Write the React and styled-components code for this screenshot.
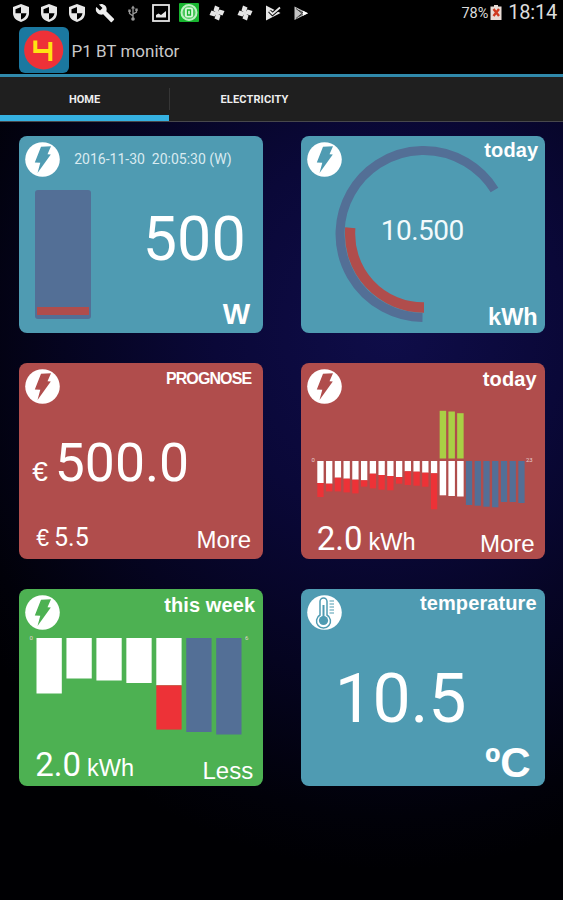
import React from 'react'
import styled, { createGlobalStyle, css } from 'styled-components'

const GlobalStyle = createGlobalStyle`
  * {
    box-sizing: border-box;
  }
  body {
    margin: 0;
    background: #000;
    font-family: Roboto, sans-serif;
  }
`

const teal = '#4f9bb2'
const red = '#b04d4c'
const green = '#4db152'
const slate = '#536f96'
const alert = '#ed3237'

const Screen = styled.main`
  display: flex;
  flex-direction: column;
  width: 563px;
  height: 900px;
  overflow: hidden;
  color: #fff;
  background: radial-gradient(ellipse 500px 540px at 390px 330px, #0f0d49 0%, #0a0838 35%, #050420 65%, #010109 90%, #000003 100%);
`

/* status bar */

const StatusBar = styled.header`
  display: flex;
  align-items: center;
  height: 25px;
  padding: 0 6px 0 10.5px;
  background: #000;
`

const StatusIcon = styled.svg`
  flex: none;
  width: 20px;
  height: 20px;
  margin-right: 8.1px;
`

const StatusInfo = styled.div`
  display: flex;
  align-items: center;
  margin-left: auto;
  color: #dcdcdc;
  white-space: nowrap;
`

const Percent = styled.span`
  font-size: 14.5px;
  letter-spacing: -0.1px;
  padding-top: 1px;
`

const Battery = styled.svg`
  width: 12px;
  height: 15px;
  margin: 0 6px 0 2px;
`

const Clock = styled.span`
  font-size: 20px;
  line-height: 25px;
  letter-spacing: -0.2px;
`

/* app bar and tabs */

const AppBar = styled.div`
  display: flex;
  align-items: center;
  height: 49px;
  padding: 1px 0 0 19px;
  background: #000;
`

const Logo = styled.svg`
  width: 50px;
  height: 46px;
`

const AppTitle = styled.h1`
  margin: 1px 0 0 2.5px;
  font-size: 17px;
  font-weight: 400;
  color: #c9c9c9;
`

const Tabs = styled.nav`
  display: flex;
  height: 48px;
  border-top: 3px solid #3089ab;
  border-bottom: 1px solid #48484c;
  background: #1f1f1f;
`

const Tab = styled.div`
  display: flex;
  align-items: center;
  justify-content: center;
  width: 169px;
  padding-top: 6px;
  font-size: 11px;
  font-weight: 700;
  letter-spacing: ${({ $spacing }) => $spacing ?? 0}px;
  color: #eee;
  border-bottom: 6px solid ${({ $active }) => ($active ? '#35b1e1' : 'transparent')};
`

const TabDivider = styled.div`
  width: 1px;
  height: 22px;
  margin-top: 11px;
  background: #363636;
`

/* cards */

const Grid = styled.section`
  display: grid;
  grid-template-columns: 244px 244px;
  grid-auto-rows: 196.5px;
  column-gap: 37.5px;
  row-gap: 30px;
  padding: 14px 0 0 19.2px;
`

const Card = styled.article`
  display: flex;
  flex-direction: column;
  border-radius: 8px;
  overflow: hidden;
  background: ${({ $color }) => $color};
`

const CardHeader = styled.div`
  display: flex;
  justify-content: space-between;
  height: 41px;
  padding: 6px 0 0 6px;
`

const Badge = styled.svg`
  flex: none;
  width: 35px;
  height: 35px;
`

const arial = css`
  font-family: 'Liberation Sans', Arial, sans-serif;
`

const Title = styled.h2`
  ${arial}
  margin: ${({ $top }) => $top ?? 0}px ${({ $right }) => $right ?? 8}px 0 0;
  font-size: 20px;
  line-height: 20px;
  font-weight: 700;
  letter-spacing: 0.1px;
`

const SmallTitle = styled(Title)`
  font-size: 16px;
  line-height: 16px;
  letter-spacing: -0.9px;
`

const Timestamp = styled.time`
  margin: 10px auto 0 14px;
  font-size: 14px;
  line-height: 14px;
  color: #d9eaf0;
  white-space: pre;
`

const PowerBody = styled.div`
  display: flex;
  justify-content: space-between;
  padding: 13px 13px 0 15.5px;
`

const Tank = styled.div`
  display: flex;
  align-items: flex-end;
  width: 56px;
  height: 129px;
  padding: 0 2px 4px;
  border-radius: 3px;
  background: ${slate};
`

const TankLevel = styled.div`
  width: 100%;
  height: 8px;
  background: ${red};
`

const PowerReadout = styled.div`
  display: flex;
  flex-direction: column;
  align-items: flex-end;
`

const PowerValue = styled.div`
  margin: 18.5px 4.5px 0 0;
  font-size: 61px;
  line-height: 61px;
`

const Unit = styled.div`
  ${arial}
  font-size: ${({ $size }) => $size}px;
  line-height: 1;
  font-weight: 700;
`

const PowerUnit = styled(Unit)`
  margin-top: 30px;
`

const GaugeCard = styled(Card)`
  display: grid;

  > * {
    grid-area: 1 / 1;
  }
`

const GaugeDial = styled.svg`
  width: 244px;
  height: 196.5px;
`

const GaugeValue = styled.div`
  align-self: center;
  margin: -7px 0 0 80px;
  font-size: 28px;
  line-height: 28px;
  letter-spacing: -0.5px;
  color: #f2fafc;
`

const GaugeUnit = styled(Unit)`
  align-self: end;
  justify-self: end;
  margin: 0 7px 3.5px 0;
`

const CostBody = styled.div`
  display: flex;
  align-items: baseline;
  height: 106px;
  padding: 32px 0 0 13px;
`

const Currency = styled.span`
  ${arial}
  font-size: ${({ $size }) => $size}px;
  line-height: 1;
  margin-right: ${({ $gap }) => $gap}px;
`

const CostValue = styled.span`
  font-size: 53.5px;
  line-height: 1;
`

const CardFooter = styled.div`
  display: flex;
  align-items: baseline;
  margin-top: auto;
  height: ${({ $height }) => $height ?? 38.5}px;
  padding: 0 ${({ $right }) => $right ?? 10}px 0 ${({ $left }) => $left ?? 16}px;
`

const Total = styled.span`
  font-size: ${({ $size }) => $size ?? 33}px;
  line-height: 36px;
`

const TotalUnit = styled.span`
  ${arial}
  margin-left: 6px;
  font-size: 23.5px;
  line-height: 1;
`

const Toggle = styled.span`
  ${arial}
  margin-left: auto;
  padding-top: ${({ $drop }) => $drop ?? 0}px;
  align-self: flex-start;
  font-size: 24px;
  line-height: 24px;
`

const Chart = styled.svg`
  width: 244px;
  height: 114px;
`

const AxisLabel = styled.text`
  font-size: 6px;
  fill: #e6cfcf;
`

const TemperatureValue = styled.div`
  margin: 34.5px 0 0 34px;
  font-size: 68px;
  line-height: 68px;
  letter-spacing: -0.3px;
`

const TemperatureUnit = styled(Unit)`
  margin: auto 14px 0 auto;
  padding-bottom: 2px;
`

const Shield = () => (
  <StatusIcon viewBox="0 0 20 20">
    <path d="M10 1 18 4V10c0 4.500-3 7.500-8 9-5-1.500-8-4.500-8-9V4Z" fill="#e8e8e8" />
    <path d="M10 4v6.200h5.500c-.3 2.900-2.500 5-5.500 6.300v-6.300H4.500V6.200Z" fill="#000" />
  </StatusIcon>
)

const Wrench = () => (
  <StatusIcon viewBox="0 0 24 24">
    <path
      d="M22.700 19l-9.100-9.100c.9-2.300.4-5-1.500-6.900-2-2-5-2.400-7.400-1.300L9 6 6 9 1.600 4.700C.4 7.100.9 10.100 2.900 12.100c1.900 1.900 4.600 2.400 6.900 1.500l9.100 9.100c.4.400 1 .4 1.400 0l2.300-2.300c.5-.4.5-1.100.1-1.400z"
      fill="#eee"
    />
  </StatusIcon>
)

const Usb = () => (
  <StatusIcon viewBox="0 0 20 20" fill="none" stroke="#999" strokeWidth="1.300">
    <path d="M10 4v11M10 13 6.500 10.500V8M10 11l3.500-2V7" />
    <path d="M10 2.500 12 5.500H8Z" fill="#999" stroke="none" />
    <circle cx="10" cy="16" r="1.800" fill="#999" stroke="none" />
    <path d="M5.300 6.500h2.400v2.400H5.300zM12.300 5.500h2.400v2.400h-2.400z" fill="#999" stroke="none" />
  </StatusIcon>
)

const Picture = () => (
  <StatusIcon viewBox="0 0 20 20">
    <rect x="2" y="2" width="16" height="16" fill="none" stroke="#e6e6e6" strokeWidth="1.800" />
    <path d="M5 14.500V12l2.500-1.500L10 12l5-4v6.500Z" fill="#e6e6e6" />
  </StatusIcon>
)

const Recorder = () => (
  <StatusIcon viewBox="0 0 20 20">
    <rect width="20" height="19" rx="1" fill="#17b52f" />
    <circle cx="10" cy="9.500" r="7.500" fill="#4cc95c" stroke="#bdf0c2" strokeWidth="2" />
    <rect x="6" y="4.500" width="8" height="10" rx="2" fill="#d8f7da" />
    <path d="M8.500 7h3v5h-3z" fill="none" stroke="#17b52f" strokeWidth="1.300" />
  </StatusIcon>
)

const Pinwheel = () => (
  <StatusIcon viewBox="0 0 20 20" fill="#e6e6e6">
    {[0, 90, 180, 270].map((angle) => (
      <path key={angle} d="M10.500 10.500 6.500 7.500 8 2.500 12.500 4.500Z" transform={`rotate(${angle} 10 10)`} />
    ))}
  </StatusIcon>
)

const PlayCheck = () => (
  <StatusIcon viewBox="0 0 20 20">
    <path d="M3 2.500 17.500 10 3 17.500Z" fill="#e6e6e6" />
    <path d="m6.500 8 3 3L17 4.500" fill="none" stroke="#000" strokeWidth="3.800" />
    <path d="m6.500 8 3 3L17 4.500" fill="none" stroke="#e6e6e6" strokeWidth="1.800" />
  </StatusIcon>
)

const Play = () => (
  <StatusIcon viewBox="0 0 20 20">
    <path d="M3.500 3.500 17 10.200 3.500 17Z" fill="#c4c4c4" />
    <path d="m5 5.500 6 4.800L5 15.500M8 7.500l5 2.800-5 3" fill="none" stroke="#444" strokeWidth="1" />
    <path d="m12 7.700 5 2.500-5 2.600Z" fill="#fff" />
  </StatusIcon>
)

const StatusIcons = () => (
  <>
    <Shield />
    <Shield />
    <Shield />
    <Wrench />
    <Usb />
    <Picture />
    <Recorder />
    <Pinwheel />
    <Pinwheel />
    <PlayCheck />
    <Play />
  </>
)

const BoltBadge = ({ color }) => (
  <Badge viewBox="0 0 35 35">
    <circle cx="17.500" cy="17.500" r="17.300" fill="#fff" />
    <path d="M16 4.800 26 4.300 22.500 12.200 25.800 12.400 12.500 31 15.300 20.800 9.800 20.500Z" fill={color} />
  </Badge>
)

const ThermometerBadge = ({ color }) => (
  <Badge viewBox="0 0 35 35">
    <circle cx="17.500" cy="17.500" r="17.300" fill="#fff" />
    <path d="M13 20V6.500a3.500 3.500 0 0 1 7 0V20a7 7 0 1 1-7 0Z" fill="none" stroke={color} strokeWidth="1.500" />
    <circle cx="16.500" cy="25.500" r="4.600" fill={color} />
    <path d="M16.500 10v13" stroke={color} strokeWidth="2" />
    <path d="M22.500 6h4.500M22.500 9h4.500M22.500 12h4.500M22.500 15h4.500M22.500 18h4.500" stroke={color} strokeWidth="1.200" />
  </Badge>
)

// bar depths below the axis, top part and what was used on top of it
const hours = [
  [22, 14], [22.700, 7.700], [16.700, 13.700], [17.700, 13.700], [18.700, 13.700], [19.300, 6.300],
  [12.700, 14.700], [14, 14.700], [15, 14.300], [16, 6.700], [10.300, 13.700], [10.700, 14],
  [11.700, 14], [12.300, 36],
]
const produced = [[47.700, 34.300], [47, 35], [45.300, 35.500]]
const expected = [44, 44.700, 45.700, 46.300, 41, 41, 42]

const HourChart = () => {
  const x = (i) => 16.300 + i * 8.740
  return (
    <Chart viewBox="0 0 244 114">
      {hours.map(([base, extra], i) => (
        <g key={i}>
          <rect x={x(i)} y="57" width="6.300" height={base} fill="#fff" />
          <rect x={x(i)} y={57 + base} width="6.300" height={extra} fill={alert} />
        </g>
      ))}
      {produced.map(([up, down], i) => (
        <g key={i}>
          <rect x={x(i + 14)} y={54.500 - up} width="6.500" height={up} fill="#a9cf45" />
          <rect x={x(i + 14)} y="57" width="6.500" height={down} fill="#fff" />
        </g>
      ))}
      {expected.map((h, i) => (
        <rect key={i} x={x(i + 17)} y="57" width="6.300" height={h} fill={slate} />
      ))}
      <AxisLabel x="10.500" y="58">0</AxisLabel>
      <AxisLabel x="225" y="58">23</AxisLabel>
    </Chart>
  )
}

const days = [55.500, 40.500, 42.500, 45, 47.300]

const WeekChart = () => {
  const x = (i) => 17.500 + i * 29.950
  return (
    <Chart viewBox="0 0 244 114">
      {days.map((h, i) => (
        <rect key={i} x={x(i)} y="8" width="25.300" height={h} fill="#fff" />
      ))}
      <rect x={x(4)} y="55.300" width="25.300" height="44.300" fill={alert} />
      <rect x={x(5)} y="8" width="25.300" height="94" fill={slate} />
      <rect x={x(6)} y="8" width="25.300" height="96.500" fill={slate} />
      <AxisLabel x="10.500" y="10">0</AxisLabel>
      <AxisLabel x="226" y="10">6</AxisLabel>
    </Chart>
  )
}

const App = () => (
  <>
    <GlobalStyle />
    <Screen>
      <StatusBar>
        <StatusIcons />
        <StatusInfo>
          <Percent>78%</Percent>
          <Battery viewBox="0 0 12 15">
            <path d="M4 0h4v1.500h3.500V15H.5V1.500H4Z" fill="#e9dcd6" />
            <path d="m3.500 4 5.500 7M9 4l-5.500 7" stroke="#d03a20" strokeWidth="2.400" />
          </Battery>
          <Clock>18:14</Clock>
        </StatusInfo>
      </StatusBar>
      <AppBar>
        <Logo viewBox="0 0 50 46">
          <rect width="50" height="46" rx="6" fill="#1b78a0" />
          <circle cx="24.700" cy="23" r="19.600" fill="#ee3138" />
          <path d="M16.300 13.500V24H33M31.300 15V34" fill="none" stroke="#ffe412" strokeWidth="4" />
        </Logo>
        <AppTitle>P1 BT monitor</AppTitle>
      </AppBar>
      <Tabs>
        <Tab $active>HOME</Tab>
        <TabDivider />
        <Tab $spacing={0.15}>ELECTRICITY</Tab>
      </Tabs>
      <Grid>
        <Card $color={teal}>
          <CardHeader>
            <BoltBadge color={teal} />
            <Timestamp>2016-11-30  20:05:30 (W)</Timestamp>
          </CardHeader>
          <PowerBody>
            <Tank>
              <TankLevel />
            </Tank>
            <PowerReadout>
              <PowerValue>500</PowerValue>
              <PowerUnit $size={29}>W</PowerUnit>
            </PowerReadout>
          </PowerBody>
        </Card>
        <GaugeCard $color={teal}>
          <GaugeDial viewBox="0 0 244 196.500" fill="none">
            <path d="M121.500 181.500A83.500 83.500 0 1 1 193.500 54" stroke={slate} strokeWidth="9" />
            <path d="M123 171.500A73.500 73.500 0 0 1 49.300 91.700" stroke={red} strokeWidth="10.300" />
          </GaugeDial>
          <CardHeader>
            <BoltBadge color={teal} />
            <Title $top={-2.5} $right={6.5}>today</Title>
          </CardHeader>
          <GaugeValue>10.500</GaugeValue>
          <GaugeUnit $size={23.5}>kWh</GaugeUnit>
        </GaugeCard>
        <Card $color={red}>
          <CardHeader>
            <BoltBadge color={red} />
            <SmallTitle $top={2} $right={12}>PROGNOSE</SmallTitle>
          </CardHeader>
          <CostBody>
            <Currency $size={28} $gap={7}>€</Currency>
            <CostValue>500.0</CostValue>
          </CostBody>
          <CardFooter $height={39} $left={17} $right={12}>
            <Currency $size={23} $gap={5}>€</Currency>
            <Total $size={25}>5.5</Total>
            <Toggle $drop={8}>More</Toggle>
          </CardFooter>
        </Card>
        <Card $color={red}>
          <CardHeader>
            <BoltBadge color={red} />
            <Title>today</Title>
          </CardHeader>
          <HourChart />
          <CardFooter>
            <Total>2.0</Total>
            <TotalUnit>kWh</TotalUnit>
            <Toggle $drop={11}>More</Toggle>
          </CardFooter>
        </Card>
        <Card $color={green}>
          <CardHeader>
            <BoltBadge color={green} />
            <Title>this week</Title>
          </CardHeader>
          <WeekChart />
          <CardFooter>
            <Total>2.0</Total>
            <TotalUnit>kWh</TotalUnit>
            <Toggle $drop={11.5}>Less</Toggle>
          </CardFooter>
        </Card>
        <Card $color={teal}>
          <CardHeader>
            <ThermometerBadge color={teal} />
            <Title $top={-2}>temperature</Title>
          </CardHeader>
          <TemperatureValue>10.5</TemperatureValue>
          <TemperatureUnit $size={42}>ºC</TemperatureUnit>
        </Card>
      </Grid>
    </Screen>
  </>
)

export default App
